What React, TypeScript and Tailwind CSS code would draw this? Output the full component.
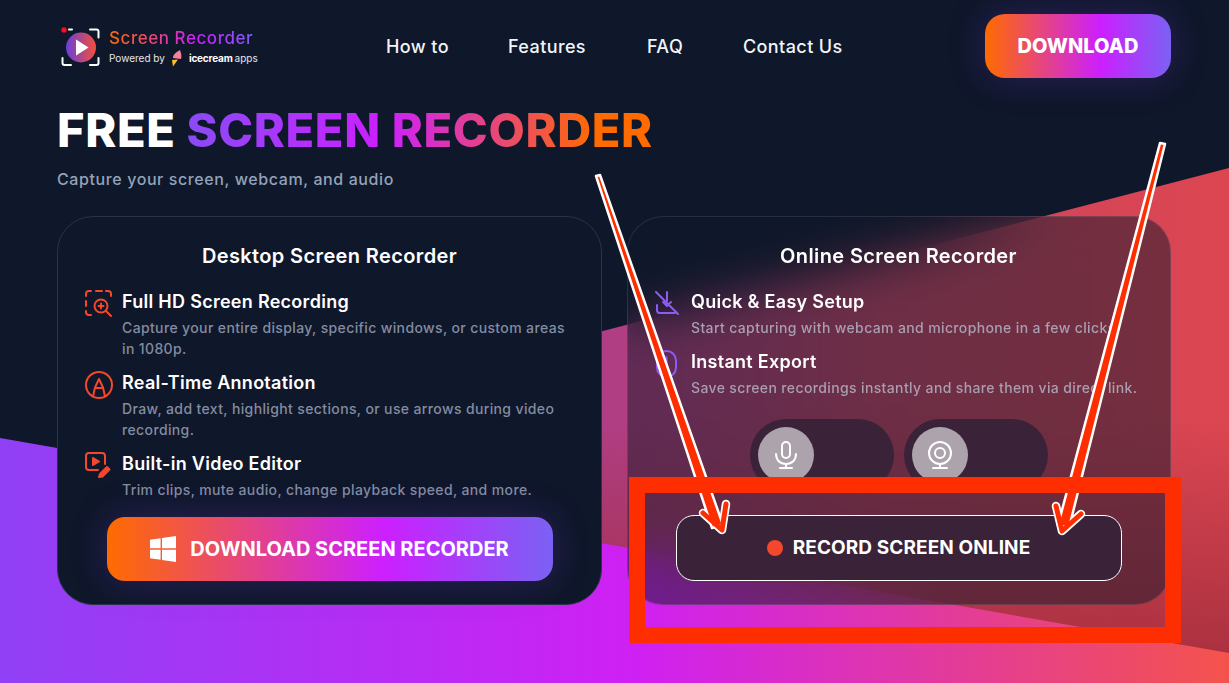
import React from 'react';

const sans = "font-['Inter','Noto_Sans',sans-serif]";
const gradBtn = 'bg-[linear-gradient(90deg,#ff6b00_0%,#cc1fff_62%,#7b61f3_100%)]';

const Logo: React.FC = () => (
  <div className="flex items-center gap-[9px]">
    <svg width="40" height="40" viewBox="0 0 40 40" fill="none">
      <defs>
        <linearGradient id="logoDisc" x1="0" x2="1" y1="0" y2="0">
          <stop offset="0" stopColor="#6a3fd8" />
          <stop offset="1" stopColor="#f4503a" />
        </linearGradient>
      </defs>
      <path d="M9 2.500h3M30 2.500h6.500a2 2 0 0 1 2 2v6M2.500 31v5a2 2 0 0 0 2 2H11M30 38h6.500a2 2 0 0 0 2-2v-5" stroke="#fff" strokeWidth="2" strokeLinecap="round" />
      <circle cx="4" cy="3" r="2.700" fill="#f5101f" />
      <circle cx="21" cy="20.500" r="15" fill="url(#logoDisc)" />
      <path d="M16 12.500 28.500 20.500 16 28.500z" fill="#fff" />
    </svg>
    <div className="flex flex-col">
      <span className="bg-[linear-gradient(90deg,#ff6b00,#cc1fff_60%,#7b61f3)] bg-clip-text text-[17px] leading-[22px] font-medium tracking-[0.55px] text-transparent">
        Screen Recorder
      </span>
      <div className="flex items-center text-[10px] leading-[16px] text-[#e5e7eb]">
        <span>Powered by</span>
        <svg width="14" height="18" viewBox="0 0 14 18" className="mx-[5px]">
          <path d="M3 9C3 5 7 3 10 1c1 3 2 6 1 9L3 9z" fill="#f8809c" />
          <path d="M2 11l6-.500-5 7z" fill="#fbbf24" />
        </svg>
        <span className="font-bold tracking-[-0.2px] text-white">icecream</span>
        <span className="ml-[2px]">apps</span>
      </div>
    </div>
  </div>
);

const ZoomIcon = () => (
  <svg width="28" height="28" viewBox="0 0 28 28" fill="none" stroke="#f4472c" strokeWidth="2" strokeLinecap="round" strokeLinejoin="round">
    <path d="M1 6V4a3 3 0 0 1 3-3h2M11 1h6M21 1h2a3 3 0 0 1 3 3v2M1 11v5M1 21v1a3 3 0 0 0 3 3h2" />
    <circle cx="16" cy="16" r="6.500" />
    <path d="M16 13.500v5M13.500 16h5M21 21l5 5" />
  </svg>
);

const PenIcon = () => (
  <svg width="28" height="28" viewBox="0 0 28 28" fill="none" stroke="#f4472c" strokeWidth="2" strokeLinecap="round" strokeLinejoin="round">
    <circle cx="14" cy="14" r="13" />
    <path d="M8 25.500l2-9L14 8l4 8.500 2 9M10 17h8" />
  </svg>
);

const VideoEditIcon = () => (
  <svg width="28" height="28" viewBox="0 0 28 28" fill="none" stroke="#f4472c" strokeWidth="2" strokeLinecap="round" strokeLinejoin="round">
    <path d="M13 18H4a3 3 0 0 1-3-3V4a3 3 0 0 1 3-3h13a3 3 0 0 1 3 3v8" />
    <path d="M8 6l6 3.500L8 13z" fill="#f4472c" />
    <path d="M14 25l1-3 7-7 2.500 2.500-7 7z" fill="#f4472c" />
  </svg>
);

const SetupIcon = () => (
  <svg width="26" height="26" viewBox="0 0 26 26" fill="none" stroke="#8b5cf6" strokeWidth="2" strokeLinecap="round" strokeLinejoin="round">
    <path d="M2 2l22 22M13 2v9M9 12l4 4 4-4M3 15v5a3 3 0 0 0 2 3h16" />
  </svg>
);

const MouseIcon = () => (
  <svg width="26" height="28" viewBox="0 0 26 28" fill="none" stroke="#8b5cf6" strokeWidth="2" strokeLinecap="round" strokeLinejoin="round">
    <rect x="3" y="1" width="19" height="26" rx="9.500" />
    <path d="M12.500 7v6" />
  </svg>
);

const MicIcon = () => (
  <svg width="28" height="30" viewBox="0 0 28 30" fill="none" stroke="#fff" strokeWidth="2" strokeLinecap="round" strokeLinejoin="round">
    <rect x="10" y="2" width="8" height="16" rx="4" />
    <path d="M4 14c0 6 4 10 10 10s10-4 10-10M14 24v4M8 28h12" />
  </svg>
);

const CamIcon = () => (
  <svg width="28" height="30" viewBox="0 0 28 30" fill="none" stroke="#fff" strokeWidth="2" strokeLinecap="round" strokeLinejoin="round">
    <circle cx="14" cy="13" r="11" />
    <circle cx="14" cy="13" r="5" />
    <path d="M14 24v4M7 28h14" />
  </svg>
);

const WindowsIcon = () => (
  <svg width="26" height="26" viewBox="0 0 26 26" fill="#fff">
    <path d="M0 3.700 10.600 2.200v10.100H0zM12 2 26 0v12.300H12zM0 13.700h10.600v10.100L0 22.300zM12 13.700h14V26l-14-2z" />
  </svg>
);

const Item: React.FC<{ icon: React.ReactNode; title: string; text: React.ReactNode; muted?: boolean }> = ({ icon, title, text, muted }) => (
  <div className="flex">
    <div className="mt-[2px] w-[37px] shrink-0">{icon}</div>
    <div>
      <h3 className="text-[18px] leading-[27px] font-semibold tracking-[0.28px] text-white">{title}</h3>
      <p className={`mt-[2px] text-[14px] leading-[21px] tracking-[0.37px] font-medium ${muted ? 'text-[#a99fb0]' : 'text-[#838ca0]'}`}>{text}</p>
    </div>
  </div>
);

const Toggle: React.FC<{ children: React.ReactNode }> = ({ children }) => (
  <div className="flex h-[72px] w-[144px] items-center rounded-[36px] bg-[#3a2238] pl-[8px]">
    <div className="flex h-[56px] w-[56px] items-center justify-center rounded-full bg-[#aca3ac]">{children}</div>
  </div>
);

const Backdrop = () => (
  <svg className="absolute inset-0" width="1229" height="683" viewBox="0 0 1229 683">
    <defs>
      <linearGradient id="upperBand" gradientUnits="userSpaceOnUse" x1="520" y1="420" x2="1229" y2="420">
        <stop offset="0" stopColor="#a63c90" />
        <stop offset="0.5" stopColor="#cb4462" />
        <stop offset="1" stopColor="#dc4650" />
      </linearGradient>
      <linearGradient id="upperShade" gradientUnits="userSpaceOnUse" x1="1229" y1="420" x2="1229" y2="680">
        <stop offset="0" stopColor="#a02c3c" stopOpacity="0" />
        <stop offset="1" stopColor="#a02c3c" stopOpacity="0.9" />
      </linearGradient>
      <linearGradient id="lowerBand" gradientUnits="userSpaceOnUse" x1="0" y1="0" x2="1229" y2="0">
        <stop offset="0" stopColor="#9040f5" />
        <stop offset="0.52" stopColor="#cf20f2" />
        <stop offset="1" stopColor="#f4534c" />
      </linearGradient>
    </defs>
    <polygon points="0,488 1229,168 1229,683 0,683" fill="url(#upperBand)" />
    <polygon points="0,488 1229,168 1229,683 0,683" fill="url(#upperShade)" />
    <polygon points="0,438 1229,653 1229,683 0,683" fill="url(#lowerBand)" />
  </svg>
);

const Arrows = () => (
  <svg className="pointer-events-none absolute inset-0" width="1229" height="683" viewBox="0 0 1229 683">
    <g stroke="#fff" strokeWidth="8.500" fill="none" strokeLinecap="round" strokeLinejoin="round">
      <path d="M703 513 722 530 726 504" />
      <path d="M1081 514 1062 531 1056 506" />
    </g>
    <polygon points="596,176 600,175 723,525 712,528" fill="#ff2e00" stroke="#fff" strokeWidth="2.500" strokeLinejoin="round" />
    <polygon points="1160,143 1165,144 1069,528 1058,525" fill="#ff2e00" stroke="#fff" strokeWidth="2.500" strokeLinejoin="round" />
    <g stroke="#ff2e00" strokeWidth="5" fill="none" strokeLinecap="round" strokeLinejoin="round">
      <path d="M703 513 722 530 726 504" />
      <path d="M1081 514 1062 531 1056 506" />
    </g>
  </svg>
);

export default function App() {
  return (
    <div className={`relative h-[683px] w-[1229px] overflow-hidden bg-[#0f172a] ${sans}`}>
      <Backdrop />

      <div className="relative flex flex-col px-[57px]">
        <header className="flex h-[100px] items-start pt-[14px] pr-[1px]">
          <div className="mt-[13px] ml-[3px] w-[326px]">
            <Logo />
          </div>
          <nav className="mt-[20px] flex text-[18px] leading-[26px] font-medium tracking-[0.4px] text-[#f1f5f9]">
            <a className="w-[122px]">How to</a>
            <a className="w-[139px]">Features</a>
            <a className="w-[96px]">FAQ</a>
            <a>Contact Us</a>
          </nav>
          <button className={`ml-auto flex h-[64px] w-[186px] items-center justify-center rounded-[20px] text-[20px] font-extrabold text-white shadow-[0_0_36px_rgba(124,58,237,0.25)] ${gradBtn}`}>
            DOWNLOAD
          </button>
        </header>

        <h1 className="text-[47px] leading-[60px] font-extrabold tracking-[0.65px] text-white">
          FREE{' '}
          <span className="bg-[linear-gradient(90deg,#8a4bf6_0%,#cc1fff_42%,#ff6b00_88%)] bg-clip-text text-transparent">SCREEN RECORDER</span>
        </h1>
        <p className="mt-[7px] text-[16px] leading-[24px] font-medium tracking-[0.6px] text-[#94a3b8]">Capture your screen, webcam, and audio</p>

        <div className="mt-[25px] grid grid-cols-[545px_544px] gap-[25px]">
          <section className="flex h-[389px] flex-col rounded-[36px] border border-[#2a3347] bg-[#0f172a] px-[27px] pt-[24px] pb-[23px]">
            <h2 className="text-center text-[20px] leading-[30px] font-semibold tracking-[0.38px] text-white">Desktop Screen Recorder</h2>
            <div className="mt-[17px] flex flex-col gap-[10px]">
              <Item icon={<ZoomIcon />} title="Full HD Screen Recording" text="Capture your entire display, specific windows, or custom areas in 1080p." />
              <Item icon={<PenIcon />} title="Real-Time Annotation" text="Draw, add text, highlight sections, or use arrows during video recording." />
              <Item icon={<VideoEditIcon />} title="Built-in Video Editor" text="Trim clips, mute audio, change playback speed, and more." />
            </div>
            <button className={`mx-auto mt-auto flex h-[64px] w-[446px] items-center justify-center gap-[14px] rounded-[18px] text-[20px] font-bold text-white shadow-[0_0_36px_rgba(124,58,237,0.25)] ${gradBtn}`}>
              <WindowsIcon />
              DOWNLOAD SCREEN RECORDER
            </button>
          </section>

          <section className="flex h-[389px] flex-col rounded-[36px] border border-white/10 bg-[#0f172a]/50 pt-[24px] pr-[27px] pb-[23px] pl-[26px] backdrop-blur-[24px]">
            <h2 className="text-center text-[20px] leading-[30px] font-semibold tracking-[0.38px] text-white">Online Screen Recorder</h2>
            <div className="mt-[17px] flex flex-col gap-[10px]">
              <Item muted icon={<SetupIcon />} title="Quick & Easy Setup" text="Start capturing with webcam and microphone in a few clicks." />
              <Item muted icon={<MouseIcon />} title="Instant Export" text="Save screen recordings instantly and share them via direct link." />
            </div>
            <div className="mt-[21px] flex justify-center gap-[10px]">
              <Toggle><MicIcon /></Toggle>
              <Toggle><CamIcon /></Toggle>
            </div>
            <button className="mx-auto mt-auto flex h-[66px] w-[446px] items-center justify-center gap-[10px] rounded-[18px] border border-white bg-[#3a2238] text-[19px] font-bold tracking-[0.1px] text-white">
              <span className="h-[16px] w-[16px] rounded-full bg-[#f4472c]" />
              RECORD SCREEN ONLINE
            </button>
          </section>
        </div>
      </div>

      <Arrows />
      {/* annotation frame painted over the page */}
      <div className="pointer-events-none absolute top-[477px] left-[629px] h-[166px] w-[552px] border-[16px] border-[#ff2e00]" />
    </div>
  );
}
